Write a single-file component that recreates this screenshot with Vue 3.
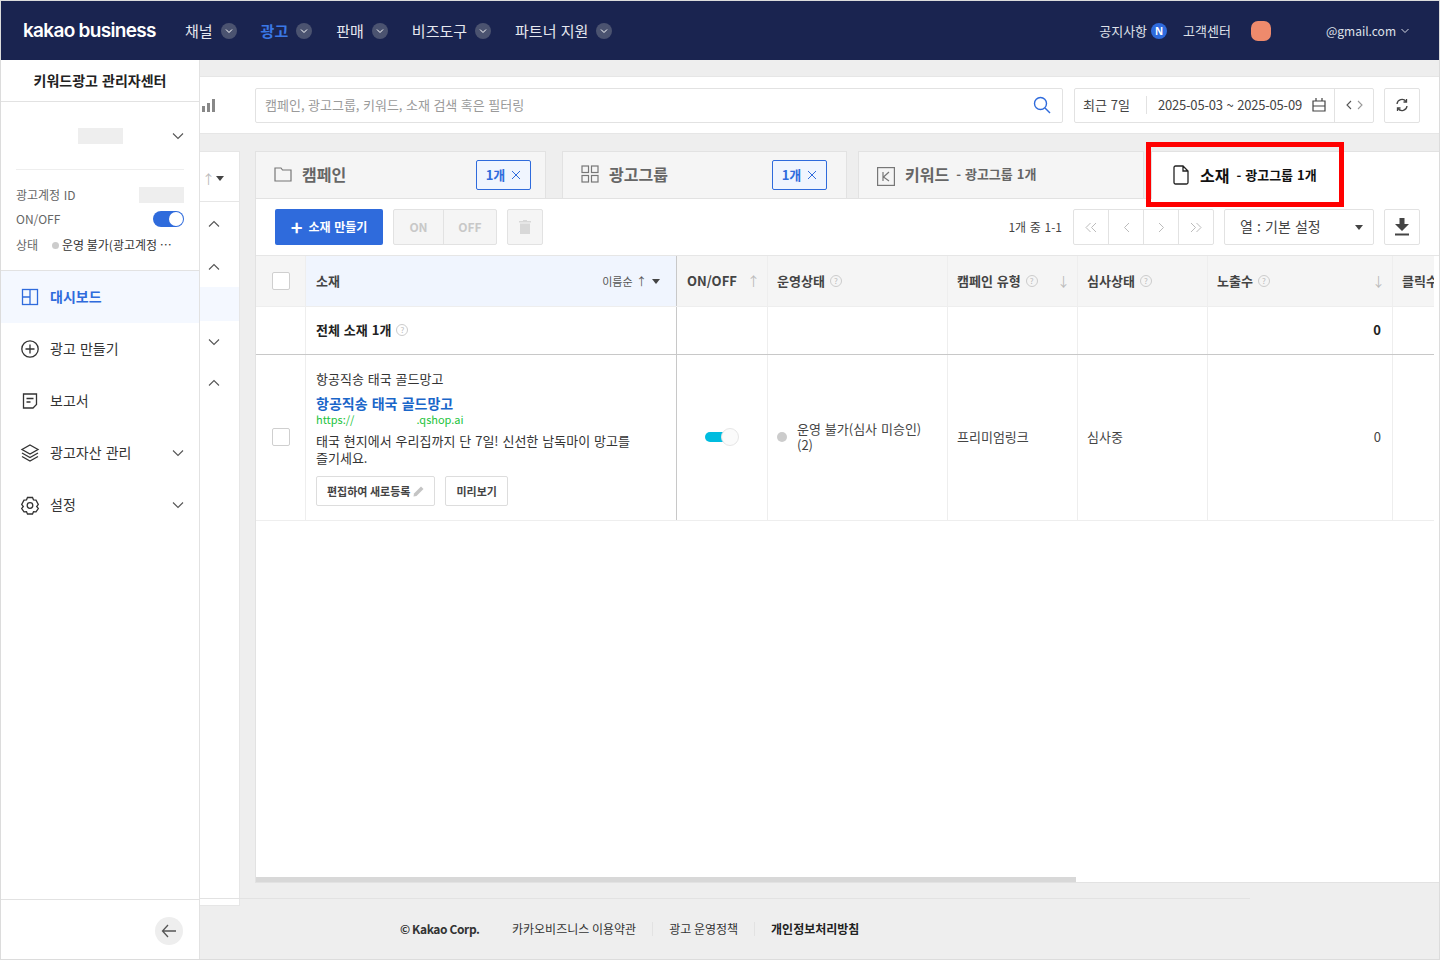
<script setup>
// Static data for the left menu, the nav bar and the table head
const navItems = [
  { label: '채널' },
  { label: '광고', active: true },
  { label: '판매' },
  { label: '비즈도구' },
  { label: '파트너 지원' },
]

const menuItems = [
  { label: '대시보드', icon: 'board', active: true },
  { label: '광고 만들기', icon: 'plus' },
  { label: '보고서', icon: 'report' },
  { label: '광고자산 관리', icon: 'layers', more: true },
  { label: '설정', icon: 'gear', more: true },
]

const stubRows = [
  { h: 44, dir: 'up' },
  { h: 41, dir: 'up' },
  { h: 34, band: true },
  { h: 41, dir: 'down' },
  { h: 42, dir: 'up' },
]

const columns = [
  { label: 'ON/OFF', sort: true },
  { label: '운영상태', help: true },
  { label: '캠페인 유형', help: true, sort: 'down' },
  { label: '심사상태', help: true },
  { label: '노출수', help: true, sort: 'down' },
  { label: '클릭수' },
]
</script>

<template>
  <div class="page">
    <!-- top navigation -->
    <header class="topbar">
      <span class="logo">kakao business</span>
      <nav class="nav">
        <span v-for="item in navItems" :key="item.label" class="nav-item" :class="{ on: item.active }">
          {{ item.label }}
          <i class="nav-caret">
            <svg width="8" height="6" viewBox="0 0 8 6"><path d="M1 1.5l3 3 3-3" fill="none" stroke="#fff" stroke-width="1" /></svg>
          </i>
        </span>
      </nav>
      <div class="top-right">
        <span>공지사항</span>
        <i class="badge-n">N</i>
        <span class="support">고객센터</span>
        <i class="avatar"></i>
        <span class="email">@gmail.com</span>
        <svg width="8" height="6" viewBox="0 0 8 6"><path d="M.5 1l3.5 3.5L7.500 1" fill="none" stroke="#d5d8e2" stroke-width="1" /></svg>
      </div>
    </header>

    <div class="body">
      <!-- left sidebar -->
      <aside class="sidebar">
        <div class="side-title">키워드광고 관리자센터</div>
        <div class="account">
          <div class="account-select">
            <i class="mask mask-name"></i>
            <svg class="chev" width="12" height="8" viewBox="0 0 12 8"><path d="M1 1.500l5 5 5-5" fill="none" stroke="#555" stroke-width="1.100" /></svg>
          </div>
          <div class="account-row first">
            <span class="muted">광고계정 ID</span>
            <i class="mask mask-id"></i>
          </div>
          <div class="account-row">
            <span class="muted">ON/OFF</span>
            <i class="switch"><i class="switch-knob"></i></i>
          </div>
          <div class="account-row state">
            <span class="muted state-label">상태</span>
            <i class="dot small"></i>
            <span class="state-text">운영 불가(광고계정 ⋯</span>
          </div>
        </div>
        <ul class="menu">
          <li v-for="m in menuItems" :key="m.label" class="menu-item" :class="{ on: m.active }">
            <svg class="menu-icon" width="20" height="20" viewBox="0 0 20 20" fill="none" stroke="currentColor" stroke-width="1.300">
              <template v-if="m.icon === 'board'">
                <rect x="2.500" y="2.500" width="15" height="15" />
                <path d="M10 2.500v15M2.500 10H10" />
              </template>
              <template v-else-if="m.icon === 'plus'">
                <circle cx="10" cy="10" r="8.200" />
                <path d="M10 5.500v9M5.500 10h9" />
              </template>
              <template v-else-if="m.icon === 'report'">
                <path d="M3.500 3h13v10.500L13 17H3.500z" />
                <path d="M6.500 7.500h7M6.500 11h4" />
              </template>
              <template v-else-if="m.icon === 'layers'">
                <path d="M10 2l8 4.500-8 4.500-8-4.500z" />
                <path d="M2 10l8 4.500 8-4.500M2 13.500l8 4.500 8-4.500" />
              </template>
              <template v-else>
                <path d="M7.500 2.500h5l1 2.300 2.500.3 2.300 4.400-1.600 2 1.600 2-2.300 3.400-2.500-.2-1 2.300h-5l-1-2.300-2.500.2-2.300-3.400 1.600-2-1.600-2L4 5.100l2.500-.3z" />
                <circle cx="10" cy="10.500" r="2.800" />
              </template>
            </svg>
            <span class="menu-label">{{ m.label }}</span>
            <svg v-if="m.more" class="chev" width="12" height="8" viewBox="0 0 12 8"><path d="M1 1.500l5 5 5-5" fill="none" stroke="#555" stroke-width="1.100" /></svg>
          </li>
        </ul>
        <div class="side-foot">
          <button class="back">
            <svg width="16" height="14" viewBox="0 0 16 14"><path d="M7 1L1.500 7 7 13M1.500 7H15" fill="none" stroke="#555" stroke-width="1.300" /></svg>
          </button>
        </div>
      </aside>

      <main class="main">
        <!-- search / date toolbar -->
        <section class="toolbar">
          <svg class="chart" width="15" height="14" viewBox="0 0 15 14"><path d="M1 8h3v6H1zM6 5h3v9H6zM11 1h3v13h-3z" fill="#888" /></svg>
          <div class="search">
            <span>캠페인, 광고그룹, 키워드, 소재 검색 혹은 필터링</span>
            <svg width="18" height="18" viewBox="0 0 18 18" fill="none" stroke="#2f6bdc" stroke-width="1.400"><circle cx="7.500" cy="7.500" r="6" /><path d="M12 12l5 5" /></svg>
          </div>
          <div class="date">
            <span class="date-range">최근 7일</span>
            <span class="date-text">2025-05-03 ~ 2025-05-09</span>
            <svg class="cal" width="14" height="14" viewBox="0 0 14 14" fill="none" stroke="#444" stroke-width="1.200"><path d="M1 3h12v10H1zM1 8h12M4 0v3M10 0v3" /></svg>
            <span class="date-arrows">
              <svg width="7" height="10" viewBox="0 0 7 10"><path d="M6 1L2 5l4 4" fill="none" stroke="#555" stroke-width="1.100" /></svg>
              <svg width="7" height="10" viewBox="0 0 7 10"><path d="M1 1l4 4-4 4" fill="none" stroke="#999" stroke-width="1.100" /></svg>
            </span>
          </div>
          <button class="square refresh">
            <svg width="14" height="14" viewBox="0 0 14 14" fill="none" stroke="#444" stroke-width="1.300"><path d="M2 6a5 5 0 0 1 9-2.500M12 8a5 5 0 0 1-9 2.500" /><path d="M11.500 1v3h-3M2.500 13v-3h3" /></svg>
          </button>
        </section>

        <div class="workspace">
          <!-- collapsed column left of the tabs -->
          <div class="stub">
            <div class="stub-head">
              <span class="arrow-light">↑</span>
              <i class="tri"></i>
            </div>
            <div v-for="(row, i) in stubRows" :key="i" class="stub-row" :class="{ band: row.band }" :style="{ height: row.h + 'px' }">
              <svg v-if="row.dir" width="12" height="8" viewBox="0 0 12 8" :class="{ flip: row.dir === 'up' }"><path d="M1 1.500l5 5 5-5" fill="none" stroke="#555" stroke-width="1.100" /></svg>
            </div>
          </div>

          <div class="content">
            <div class="tabs">
              <div class="tab t1">
                <svg width="18" height="16" viewBox="0 0 18 16" fill="none" stroke="#777" stroke-width="1.200"><path d="M1 2h6l1.500 2H17v11H1z" /></svg>
                <b>캠페인</b>
                <span class="chip">1개 <svg width="10" height="10" viewBox="0 0 10 10"><path d="M1 1l8 8M9 1l-8 8" stroke="#2f6bdc" stroke-width="1" /></svg></span>
              </div>
              <div class="tab t2">
                <svg width="18" height="18" viewBox="0 0 18 18" fill="none" stroke="#777" stroke-width="1.200"><rect x="1" y="1" width="6.500" height="6.500" /><rect x="10.500" y="1" width="6.500" height="6.500" /><rect x="1" y="10.500" width="6.500" height="6.500" /><rect x="10.500" y="10.500" width="6.500" height="6.500" /></svg>
                <b>광고그룹</b>
                <span class="chip">1개 <svg width="10" height="10" viewBox="0 0 10 10"><path d="M1 1l8 8M9 1l-8 8" stroke="#2f6bdc" stroke-width="1" /></svg></span>
              </div>
              <div class="tab t3">
                <svg class="k-icon" width="18" height="19" viewBox="0 0 18 19" fill="none" stroke="#777" stroke-width="1.200"><rect x=".6" y=".6" width="16.800" height="17.800" /><path d="M6 5v9M12 5L6.500 10l5.500 4" /></svg>
                <b>키워드</b>
                <small>- 광고그룹 1개</small>
              </div>
              <div class="tab t4">
                <svg width="16" height="20" viewBox="0 0 16 20" fill="none" stroke="#222" stroke-width="1.300"><path d="M1 2.500A1.500 1.500 0 0 1 2.500 1H10l5 5v11.500a1.500 1.500 0 0 1-1.500 1.500h-11A1.500 1.500 0 0 1 1 17.500zM10 1v5h5" /></svg>
                <b>소재</b>
                <small>- 광고그룹 1개</small>
              </div>
              <!-- red annotation box over the active tab -->
              <i class="callout"></i>
            </div>

            <div class="panel">
              <div class="actions">
                <button class="btn-create"><span class="plus">+</span>소재 만들기</button>
                <div class="onoff"><span class="on-part">ON</span><span class="off-part">OFF</span></div>
                <button class="square trash">
                  <svg width="12" height="14" viewBox="0 0 12 14"><path d="M4 0h4v1h4v1.500H0V1h4zM1 3.500h10V14H1z" fill="#d8d8d8" /></svg>
                </button>
                <span class="count">1개 중 1-1</span>
                <div class="pager">
                  <span><svg width="14" height="11" viewBox="0 0 14 11"><path d="M6.500 1l-4.500 4.500 4.500 4.500M12 1L7.500 5.500 12 10" fill="none" stroke="#bbb" /></svg></span>
                  <span><svg width="7" height="11" viewBox="0 0 7 11"><path d="M6 1L1.500 5.500 6 10" fill="none" stroke="#bbb" /></svg></span>
                  <span><svg width="7" height="11" viewBox="0 0 7 11"><path d="M1 1l4.500 4.500L1 10" fill="none" stroke="#bbb" /></svg></span>
                  <span><svg width="14" height="11" viewBox="0 0 14 11"><path d="M2 1l4.500 4.500L2 10M7.500 1L12 5.500 7.500 10" fill="none" stroke="#bbb" /></svg></span>
                </div>
                <div class="column-select"><span class="select-label">열 : 기본 설정</span><i class="tri"></i></div>
                <button class="square download">
                  <svg width="14" height="18" viewBox="0 0 14 18"><path d="M4.500 0h5v6H14l-7 7-7-7h4.500zM0 15.500h14V17.500H0z" fill="#444" /></svg>
                </button>
              </div>

              <div class="table">
                <!-- head row -->
                <div class="row head">
                  <div class="cell check-cell"><i class="check"></i></div>
                  <div class="cell name-cell name-head">
                    <b>소재</b>
                    <span class="name-sort">이름순 ↑<i class="tri"></i></span>
                  </div>
                  <div v-for="c in columns" :key="c.label" class="cell">
                    <b class="nowrap">{{ c.label }}</b>
                    <i v-if="c.help" class="help">?</i>
                    <span v-if="c.sort" class="arrow-light push">{{ c.sort === 'down' ? '↓' : '↑' }}</span>
                  </div>
                </div>
                <!-- summary row -->
                <div class="row total">
                  <div class="cell check-cell"></div>
                  <div class="cell name-cell"><b>전체 소재 1개</b><i class="help">?</i></div>
                  <div class="cell"></div>
                  <div class="cell"></div>
                  <div class="cell"></div>
                  <div class="cell"></div>
                  <div class="cell num"><b>0</b></div>
                  <div class="cell"></div>
                </div>
                <!-- the single creative -->
                <div class="row item">
                  <div class="cell check-cell"><i class="check"></i></div>
                  <div class="cell name-cell creative">
                    <p class="c-name">항공직송 태국 골드망고</p>
                    <a class="c-link">항공직송 태국 골드망고</a>
                    <p class="c-url"><span>https://</span><span>.qshop.ai</span></p>
                    <p class="c-desc">태국 현지에서 우리집까지 단 7일! 신선한 남독마이 망고를<br />즐기세요.</p>
                    <div class="c-btns">
                      <button class="mini">편집하여 새로등록
                        <svg width="11" height="11" viewBox="0 0 11 11"><path d="M8 .5L10.500 3 3.500 10 .5 10.500 1 7.500z" fill="#c4c4c4" /></svg>
                      </button>
                      <button class="mini">미리보기</button>
                    </div>
                  </div>
                  <div class="cell toggle-cell"><i class="teal"><i class="teal-knob"></i></i></div>
                  <div class="cell status"><i class="dot"></i><span>운영 불가(심사 미승인)<br />(2)</span></div>
                  <div class="cell">프리미엄링크</div>
                  <div class="cell">심사중</div>
                  <div class="cell num">0</div>
                  <div class="cell"></div>
                </div>
              </div>

              <div class="scroll"><i class="scroll-thumb"></i></div>
            </div>
          </div>
        </div>

        <footer class="footer">
          <span class="copy">© Kakao Corp.</span>
          <span class="foot-link">카카오비즈니스 이용약관</span>
          <span class="foot-link">광고 운영정책</span>
          <span class="foot-link strong">개인정보처리방침</span>
        </footer>
      </main>
    </div>
  </div>
</template>

<style>
body { margin: 0; }
</style>

<style scoped>
* { box-sizing: border-box; }
p { margin: 0; }
i { font-style: normal; display: block; }
button { font-family: inherit; word-spacing: inherit; cursor: pointer; padding: 0; background: #fff; }

.page {
  width: 1440px;
  height: 960px;
  overflow: hidden;
  display: flex;
  flex-direction: column;
  border: 1px solid #dcdcdc;
  background: #eeeeee;
  color: #333;
  font: 13px/18px "Noto Sans CJK KR", "Noto Sans", sans-serif;
  word-spacing: 1px;
}

/* top bar */
.topbar {
  height: 59px;
  flex-shrink: 0;
  display: flex;
  align-items: center;
  padding: 0 0 0 22px;
  background: #1a2450;
  color: #fff;
}
.logo {
  width: 162px;
  font: 600 19px/24px Inter, sans-serif;
  letter-spacing: -0.7px;
  word-spacing: 0;
}
.nav { display: flex; gap: 24px; }
.nav-item {
  display: flex;
  align-items: center;
  gap: 8px;
  font-size: 15px;
  color: #e6e8ef;
}
.nav-item.on { color: #3a78e6; font-weight: 700; }
.nav-caret {
  width: 16px;
  height: 16px;
  border-radius: 50%;
  background: #4b5370;
  display: flex;
  align-items: center;
  justify-content: center;
}
.top-right {
  margin-left: auto;
  display: flex;
  align-items: center;
  padding-right: 30px;
  color: #dfe1e9;
}
.badge-n {
  width: 16px;
  height: 16px;
  margin-left: 4px;
  border-radius: 50%;
  background: #2f6bdc;
  color: #fff;
  font: 700 10px/16px "Noto Sans", sans-serif;
  text-align: center;
}
.support { margin-left: 16px; }
.avatar {
  width: 20px;
  height: 20px;
  margin-left: 20px;
  border-radius: 7px;
  background: #ee8a6c;
}
.email { margin-left: 55px; margin-right: 5px; font-size: 12px; }

.body { flex: 1; min-height: 0; display: flex; }

/* sidebar */
.sidebar {
  width: 199px;
  flex-shrink: 0;
  display: flex;
  flex-direction: column;
  background: #fff;
  border-right: 1px solid #e2e2e2;
  position: relative;
  z-index: 1;
}
.side-title {
  height: 42px;
  flex-shrink: 0;
  border-bottom: 1px solid #e2e2e2;
  text-align: center;
  font-size: 14px;
  font-weight: 700;
  line-height: 40px;
  color: #222;
}
.account {
  height: 169px;
  flex-shrink: 0;
  padding: 0 15px;
  border-bottom: 1px solid #e2e2e2;
  font-size: 12px;
}
.account-select {
  height: 68px;
  display: flex;
  align-items: center;
  border-bottom: 1px solid #eeeeee;
  padding-left: 62px;
}
.chev { margin-left: auto; flex-shrink: 0; }
.mask { background: #eeeeee; }
.mask-name { width: 45px; height: 16px; }
.mask-id { width: 45px; height: 16px; margin-left: auto; }
.account-row {
  height: 24px;
  display: flex;
  align-items: center;
}
.account-row.first { margin-top: 13px; }
.account-row.state { margin-top: 2px; }
.muted { color: #666; }
.state-label { width: 36px; }
.state-text { color: #333; white-space: nowrap; word-spacing: 0; }
.switch {
  width: 31px;
  height: 16px;
  margin-left: auto;
  border-radius: 8px;
  background: #2f6bdc;
  position: relative;
}
.switch-knob {
  position: absolute;
  right: 1px;
  top: 1px;
  width: 14px;
  height: 14px;
  border-radius: 50%;
  background: #fff;
}
.dot { width: 10px; height: 10px; border-radius: 50%; background: #cccccc; flex-shrink: 0; }
.dot.small { width: 7px; height: 7px; margin-right: 3px; }

.menu { list-style: none; margin: 0; padding: 0; flex: 1; }
.menu-item {
  height: 52px;
  display: flex;
  align-items: center;
  padding: 0 15px 0 19px;
  font-size: 14px;
  color: #333;
}
.menu-item.on { background: #f4f8ff; color: #2f6bdc; font-weight: 700; }
.menu-label { margin: -2px 0 0 10px; }
.side-foot {
  height: 60px;
  flex-shrink: 0;
  border-top: 1px solid #e2e2e2;
  display: flex;
  align-items: center;
  justify-content: flex-end;
  padding: 2px 16px 0 0;
}
.back {
  width: 28px;
  height: 28px;
  border: 0;
  border-radius: 50%;
  background: #eeeeee;
  display: flex;
  align-items: center;
  justify-content: center;
}

/* main */
.main {
  flex: 1;
  min-width: 0;
  padding-top: 16px;
  display: flex;
  flex-direction: column;
}
.toolbar {
  height: 58px;
  flex-shrink: 0;
  display: flex;
  align-items: center;
  padding: 0 19px 0 1px;
  background: #fff;
  border-top: 1px solid #e6e6e6;
  border-bottom: 1px solid #e6e6e6;
}
.chart { margin-right: 39px; }
.search {
  flex: 1;
  height: 35px;
  display: flex;
  align-items: center;
  justify-content: space-between;
  padding: 0 11px 1px 9px;
  border: 1px solid #e2e2e2;
  border-radius: 2px;
  color: #9a9a9a;
  word-spacing: 0.6px;
}
.date {
  width: 300px;
  height: 35px;
  margin-left: 11px;
  display: flex;
  align-items: center;
  border: 1px solid #e2e2e2;
  border-radius: 2px;
  color: #444;
}
.date-range {
  width: 72px;
  padding-left: 8px;
  border-right: 1px solid #e2e2e2;
}
.date-text { margin-left: 11px; white-space: nowrap; letter-spacing: -0.2px; }
.cal { margin-left: 10px; }
.date-arrows {
  margin-left: auto;
  width: 39px;
  height: 100%;
  display: flex;
  align-items: center;
  justify-content: center;
  gap: 5px;
  border-left: 1px solid #e2e2e2;
}
.square {
  width: 36px;
  height: 36px;
  flex-shrink: 0;
  display: flex;
  align-items: center;
  justify-content: center;
  border: 1px solid #e2e2e2;
  border-radius: 2px;
}
.refresh { height: 35px; margin-left: 10px; }

.workspace {
  flex: 1;
  min-height: 0;
  margin-top: 17px;
  display: flex;
}

/* collapsed column */
.stub {
  width: 40px;
  flex-shrink: 0;
  height: 755px;
  background: #fff;
  border: 1px solid #e6e6e6;
  border-left: 0;
}
.stub-head {
  height: 50px;
  display: flex;
  align-items: center;
  padding: 4px 0 0 2px;
  gap: 1px;
  border-bottom: 1px solid #e6e6e6;
}
.stub-row { display: flex; align-items: center; justify-content: center; padding-right: 12px; }
.stub-row.band { background: #f4f8ff; }
.flip { transform: rotate(180deg); }
.arrow-light { color: #bbbbbb; font-size: 13px; }
.tri {
  width: 0;
  height: 0;
  border-left: 4px solid transparent;
  border-right: 4px solid transparent;
  border-top: 5px solid #444;
}

.content {
  flex: 1;
  min-width: 0;
  margin-left: 15px;
  height: 732px;
  display: flex;
  flex-direction: column;
}

/* tabs */
.tabs {
  height: 47px;
  flex-shrink: 0;
  display: flex;
  position: relative;
}
.tab {
  display: flex;
  align-items: center;
  padding: 0 0 2px 18px;
  background: #f5f5f5;
  border: 1px solid #e2e2e2;
  border-bottom: 0;
  color: #666;
}
.tab b { font-size: 16px; margin-left: 10px; }
.tab small { font-size: 13px; font-weight: 700; margin-left: 7px; }
.tab .chip { margin-top: 2px; }
.t1 { width: 291px; }
.t2 { width: 285px; margin-left: 16px; }
.t2 .chip { margin-right: 19px; }
.t3 { width: 286px; margin-left: 11px; }
.k-icon { margin-top: 4px; }
.t4 {
  flex: 1;
  margin-left: 7px;
  padding-left: 21px;
  background: #fff;
  border-right: 0;
  color: #111;
  position: relative;
  z-index: 1;
  margin-bottom: -1px;
}
.t4 b { margin-left: 11px; }
.chip {
  margin-left: auto;
  margin-right: 14px;
  width: 55px;
  height: 30px;
  display: flex;
  align-items: center;
  justify-content: center;
  gap: 6px;
  background: #f0f5fe;
  border: 1px solid #2f6bdc;
  border-radius: 2px;
  color: #2f6bdc;
  font-size: 13px;
  font-weight: 700;
}
.callout {
  position: absolute;
  z-index: 2;
  left: 891px;
  top: -9px;
  width: 198px;
  height: 65px;
  border: 5px solid #ff0000;
  pointer-events: none;
}

/* white panel */
.panel {
  flex: 1;
  min-height: 0;
  display: flex;
  flex-direction: column;
  position: relative;
  background: #fff;
  border: 1px solid #e2e2e2;
  border-right: 0;
}
.actions {
  height: 57px;
  flex-shrink: 0;
  display: flex;
  align-items: center;
  padding: 0 19px;
  border-bottom: 1px solid #e6e6e6;
}
.btn-create {
  width: 108px;
  height: 36px;
  padding-bottom: 1px;
  border: 0;
  border-radius: 2px;
  background: #2f6bdc;
  color: #fff;
  font-size: 12px;
  font-weight: 700;
  display: flex;
  align-items: center;
  justify-content: center;
}
.plus { font-size: 20px; font-weight: 700; margin-right: 6px; line-height: 18px; }
.onoff {
  width: 104px;
  height: 36px;
  margin-left: 10px;
  display: flex;
  background: #f5f5f5;
  border: 1px solid #e2e2e2;
  border-radius: 2px;
  color: #c8c8c8;
  font-size: 12px;
  font-weight: 700;
}
.onoff span { display: flex; align-items: center; justify-content: center; }
.on-part { width: 49px; }
.off-part { flex: 1; border-left: 1px solid #e2e2e2; }
.trash { margin-left: 10px; background: #f5f5f5; }
.count { margin-left: auto; font-size: 12px; color: #444; }
.pager {
  width: 141px;
  height: 36px;
  margin-left: 11px;
  display: flex;
  border: 1px solid #e2e2e2;
  border-radius: 2px;
}
.pager span { flex: 1; display: flex; align-items: center; justify-content: center; }
.pager span + span { border-left: 1px solid #e2e2e2; }
.column-select {
  width: 150px;
  height: 36px;
  margin-left: 10px;
  display: flex;
  align-items: center;
  justify-content: space-between;
  padding: 0 10px 0 15px;
  border: 1px solid #e2e2e2;
  border-radius: 2px;
  font-size: 14px;
  color: #444;
}
.select-label { margin-top: -2px; }
.download { margin-left: 10px; }

/* table */
.table { width: 1178px; overflow: hidden; }
.row {
  display: grid;
  grid-template-columns: 50px 371px 91px 180px 130px 130px 185px 41px;
}
.cell {
  display: flex;
  align-items: center;
  padding: 0 10px 0 9px;
  border-right: 1px solid #eeeeee;
  min-width: 0;
  white-space: nowrap;
}
.cell:nth-child(-n+3) { padding-left: 10px; }
.cell:last-child { border-right: 0; }
.name-cell { border-right-color: #c8c8c8; }
.check-cell { justify-content: center; padding: 0 !important; }
.check {
  width: 18px;
  height: 18px;
  background: #fff;
  border: 1px solid #cfcfcf;
  border-radius: 2px;
}
.head { height: 51px; background: #f5f5f5; border-bottom: 1px solid #eeeeee; color: #444; }
.name-head { background: #f0f5fe; justify-content: space-between; padding-right: 16px; }
.name-sort { display: flex; align-items: center; gap: 5px; font-size: 11px; color: #555; }
.help {
  width: 12px;
  height: 12px;
  margin-left: 5px;
  border: 1px solid #cccccc;
  border-radius: 50%;
  color: #bbbbbb;
  font-size: 8px;
  line-height: 10px;
  text-align: center;
  flex-shrink: 0;
}
.push { margin-left: auto; margin-right: -3px; }
.total { height: 48px; border-bottom: 1px solid #c8c8c8; color: #222; }
.total .cell { padding-bottom: 2px; }
.num { justify-content: flex-end; padding-right: 11px; }
.item { height: 166px; border-bottom: 1px solid #eeeeee; color: #444; }
.item .cell { padding-bottom: 2px; }
.item .check { margin-top: -1px; }
.creative {
  flex-direction: column;
  align-items: flex-start;
  padding-top: 15px;
  color: #333;
}
.c-link {
  margin-top: 6px;
  color: #1a66c9;
  font-size: 14px;
  font-weight: 700;
}
.c-url {
  display: flex;
  gap: 62px;
  margin-top: -1px;
  color: #22c33c;
  font-size: 11px;
  line-height: 16px;
}
.c-desc { margin-top: 5px; line-height: 17px; }
.c-btns { display: flex; gap: 10px; margin-top: 10px; }
.mini {
  height: 30px;
  padding: 0 10px;
  display: flex;
  align-items: center;
  gap: 3px;
  border: 1px solid #dddddd;
  border-radius: 2px;
  color: #444;
  font-size: 11px;
  font-weight: 700;
  word-spacing: 0;
}
.toggle-cell { justify-content: center; padding: 0 0 2px 0 !important; }
.teal {
  width: 34px;
  height: 18px;
  position: relative;
}
.teal::before {
  content: "";
  position: absolute;
  left: 0;
  top: 4px;
  width: 24px;
  height: 10px;
  border-radius: 5px;
  background: #00bcdf;
}
.teal-knob {
  position: absolute;
  right: 0;
  top: 0;
  width: 18px;
  height: 18px;
  border-radius: 50%;
  background: #fbfbfb;
  border: 1px solid #e6e6e6;
}
.status { gap: 10px; white-space: normal; line-height: 16px; }

.scroll {
  position: absolute;
  left: 0;
  right: 0;
  bottom: 0;
  height: 5px;
}
.scroll-thumb { width: 820px; height: 5px; background: #d8d8d8; }

/* footer */
.footer {
  height: 61px;
  width: 1050px;
  flex-shrink: 0;
  margin-top: -6px;
  position: relative;
  display: flex;
  align-items: center;
  padding: 0 0 0 200px;
  border-top: 1px solid #e2e2e2;
  font-size: 12px;
  color: #333;
}
.copy { font-weight: 700; width: 112px; letter-spacing: -0.4px; word-spacing: 0; }
.foot-link { padding: 0 16px 0 0; margin-right: 16px; border-right: 1px solid #e2e2e2; line-height: 14px; word-spacing: 0; }
.foot-link.strong { border-right: 0; font-weight: 700; color: #222; }
.nowrap { white-space: nowrap; }
</style>
